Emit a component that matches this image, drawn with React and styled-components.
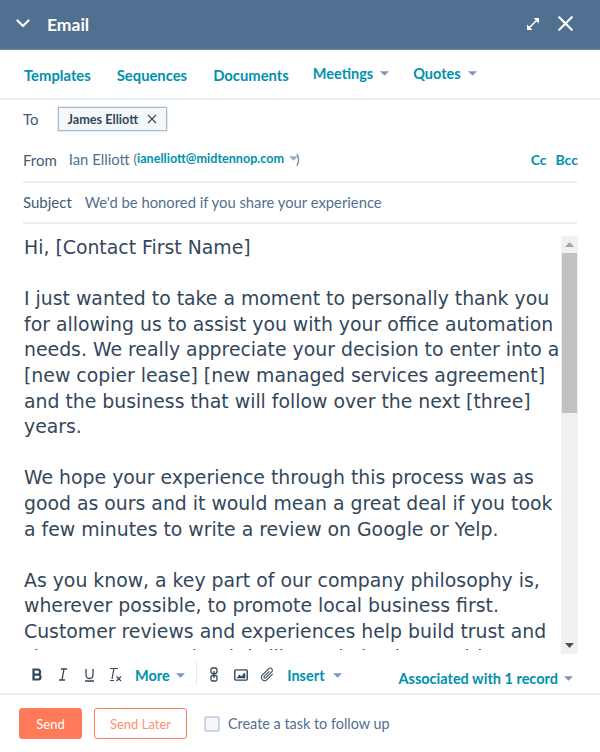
import React from "react";
import styled, { createGlobalStyle } from "styled-components";

const GlobalStyle = createGlobalStyle`
  html, body {
    margin: 0;
    padding: 0;
    background: #fff;
  }
`;

const paragraphs = [
  ["Hi, [Contact First Name]"],
  [
    "I just wanted to take a moment to personally thank you",
    "for allowing us to assist you with your office automation",
    "needs. We really appreciate your decision to enter into a",
    "[new copier lease] [new managed services agreement]",
    "and the business that will follow over the next [three]",
    "years.",
  ],
  [
    "We hope your experience through this process was as",
    "good as ours and it would mean a great deal if you took",
    "a few minutes to write a review on Google or Yelp.",
  ],
  [
    "As you know, a key part of our company philosophy is,",
    "wherever possible, to promote local business first.",
    "Customer reviews and experiences help build trust and",
    "show prospects what it is like to do business with us",
  ],
];

const Caret = ({ color = "#7c98b6" }) => (
  <CaretIcon viewBox="0 0 10 5">
    <path d="M0 0h10L5 5z" fill={color} />
  </CaretIcon>
);

const App = () => {
  return (
    <Page>
      <GlobalStyle />
      <Header>
        <HeaderLeft>
          <svg width="14" height="9" viewBox="0 0 14 9" fill="none">
            <path d="M1.5 1.5 7 7l5.5-5.5" stroke="#fff" strokeWidth="2.2" strokeLinecap="round" strokeLinejoin="round" />
          </svg>
          <HeaderTitle>Email</HeaderTitle>
        </HeaderLeft>
        <HeaderRight>
          <svg width="14" height="14" viewBox="0 0 14 14" fill="none">
            <path d="M2 12 12 2" stroke="#fff" strokeWidth="1.6" />
            <path d="M7.5 1h5.5v5.5zM1 7.5V13h5.5z" fill="#fff" />
          </svg>
          <svg width="15" height="15" viewBox="0 0 15 15" fill="none">
            <path d="M1.2 1.2 13.8 13.8M13.8 1.2 1.2 13.8" stroke="#fff" strokeWidth="2.2" strokeLinecap="round" />
          </svg>
        </HeaderRight>
      </Header>

      <Tabs>
        <Tab>Templates</Tab>
        <Tab>Sequences</Tab>
        <Tab>Documents</Tab>
        <TabMenu>Meetings <Caret /></TabMenu>
        <TabMenu>Quotes <Caret /></TabMenu>
      </Tabs>

      <ToRow>
        <FieldLabel>To</FieldLabel>
        <Chip>
          James Elliott
          <svg width="10" height="10" viewBox="0 0 10 10" fill="none">
            <path d="M1 1l8 8M9 1 1 9" stroke="#33475b" strokeWidth="1.1" />
          </svg>
        </Chip>
      </ToRow>

      <FromRow>
        <FieldLabel>From</FieldLabel>
        <FromValue>
          Ian Elliott <Paren>(</Paren><FromEmail>ianelliott@midtennop.com</FromEmail>
          <Caret color="#99acc2" /><CloseParen>)</CloseParen>
        </FromValue>
        <CcLinks>
          <span>Cc</span>
          <span>Bcc</span>
        </CcLinks>
      </FromRow>

      <SubjectRow>
        <FieldLabel>Subject</FieldLabel>
        <SubjectValue>We'd be honored if you share your experience</SubjectValue>
      </SubjectRow>

      <EditorArea>
        <BodyClip>
          <BodyText>
            {paragraphs.map((lines, i) => (
              <Paragraph key={i}>
                {lines.map((line) => (
                  <BodyLine key={line}>{line}</BodyLine>
                ))}
              </Paragraph>
            ))}
          </BodyText>
        </BodyClip>
        <Scrollbar>
          <ScrollButton>
            <svg width="9" height="5" viewBox="0 0 9 5"><path d="M4.5 0 9 5H0z" fill="#a3a3a3" /></svg>
          </ScrollButton>
          <ScrollTrack>
            <ScrollThumb />
          </ScrollTrack>
          <ScrollButton>
            <svg width="9" height="5" viewBox="0 0 9 5"><path d="M0 0h9L4.5 5z" fill="#505050" /></svg>
          </ScrollButton>
        </Scrollbar>
      </EditorArea>

      <Toolbar>
        <ToolIcon>
          <svg width="12" height="13" viewBox="0 0 12 13" fill="none">
            <path d="M2.5 1.5h4a2.6 2.6 0 0 1 0 5.2h-4zM2.5 6.7h4.6a2.4 2.4 0 0 1 0 4.8H2.5z" stroke="#33475b" strokeWidth="2.2" />
          </svg>
        </ToolIcon>
        <ToolIcon>
          <svg width="10" height="13" viewBox="0 0 10 13" fill="none">
            <path d="M3 1h6M1 12h6M6 1 4 12" stroke="#33475b" strokeWidth="1.3" />
          </svg>
        </ToolIcon>
        <ToolIcon>
          <svg width="11" height="14" viewBox="0 0 11 14" fill="none">
            <path d="M2 1v6a3.5 3.5 0 0 0 7 0V1M1 13h9" stroke="#33475b" strokeWidth="1.3" />
          </svg>
        </ToolIcon>
        <ToolIcon>
          <svg width="13" height="15" viewBox="0 0 13 15" fill="none">
            <path d="M1 1.5h8M5 1.5 3 12M1 13.5h4" stroke="#33475b" strokeWidth="1.2" />
            <path d="M7.5 9.5l4.5 4.5M12 9.5 7.5 14" stroke="#33475b" strokeWidth="1.2" />
          </svg>
        </ToolIcon>
        <ToolMenu>More <Caret /></ToolMenu>
        <ToolDivider />
        <InsertIcon>
          <svg width="8" height="15" viewBox="0 0 8 15" fill="none">
            <rect x="1" y="1" width="6" height="5.5" rx="1.5" stroke="#33475b" strokeWidth="1.3" />
            <rect x="1" y="8.5" width="6" height="5.5" rx="1.5" stroke="#33475b" strokeWidth="1.3" />
            <path d="M4 4v7" stroke="#33475b" strokeWidth="1.3" />
          </svg>
        </InsertIcon>
        <InsertIcon>
          <svg width="14" height="12" viewBox="0 0 13 11" fill="none">
            <rect x=".7" y=".7" width="11.6" height="9.6" rx="1" stroke="#33475b" strokeWidth="1.3" />
            <path d="M2.5 8.5 5 5l2 2 2.5-3.5 1 1v4z" fill="#33475b" />
          </svg>
        </InsertIcon>
        <InsertIcon>
          <svg width="14" height="15" viewBox="0 0 13 14" fill="none">
            <path d="M11.8 6.5 6.5 11.8a3 3 0 0 1-4.3-4.3l5.8-5.8a2 2 0 0 1 2.9 2.9L5.3 10.2a1 1 0 0 1-1.4-1.4L8.7 4" stroke="#33475b" strokeWidth="1" />
          </svg>
        </InsertIcon>
        <InsertMenu>Insert <Caret /></InsertMenu>
        <Associated>Associated with 1 record <Caret /></Associated>
      </Toolbar>

      <Footer>
        <SendButton>Send</SendButton>
        <LaterButton>Send Later</LaterButton>
        <TaskOption>
          <Checkbox />
          Create a task to follow up
        </TaskOption>
      </Footer>
    </Page>
  );
};

const Page = styled.div`
  width: 600px;
  height: 752px;
  overflow: hidden;
  background: #fff;
  color: #33475b;
  font-family: Lato, "Open Sans", sans-serif;
`;

const CaretIcon = styled.svg`
  width: 9px;
  height: 5px;
  flex: none;
`;

const Header = styled.header`
  height: 50px;
  background: #516f90;
  border-bottom: 1px solid #6f88a4;
  box-sizing: border-box;
  padding: 0 27px 2px 16px;
  display: flex;
  align-items: center;
  justify-content: space-between;
`;

const HeaderLeft = styled.div`
  display: flex;
  align-items: center;
  gap: 17px;
`;

const HeaderTitle = styled.span`
  color: #fff;
  font-size: 17.5px;
  font-weight: 700;
  position: relative;
  top: 1px;
`;

const HeaderRight = styled.div`
  display: flex;
  align-items: center;
  gap: 18px;
`;

const Tabs = styled.nav`
  height: 50px;
  box-sizing: border-box;
  padding: 0 24px 3px;
  border-bottom: 2px solid #e9eef4;
  display: flex;
  align-items: center;
  gap: 26px;
`;

const Tab = styled.span`
  color: #0091ae;
  font-size: 14.8px;
  font-weight: 700;
  position: relative;
  top: 2px;
`;

const TabMenu = styled(Tab)`
  display: inline-flex;
  align-items: center;
  gap: 7px;
  top: 1px;
  margin-left: -2px;
  font-size: 14.5px;
`;

const FieldLabel = styled.span`
  font-size: 15px;
  color: #425b76;
`;

const ToRow = styled.div`
  height: 38px;
  padding: 0 23px;
  display: flex;
  align-items: center;
  gap: 19px;
`;

const Chip = styled.span`
  height: 24px;
  box-sizing: border-box;
  padding: 0 9px;
  border: 1px solid #a9bbd0;
  box-shadow: 0 0 0 .5px #cbd6e2;
  background: #f5f8fa;
  display: inline-flex;
  align-items: center;
  gap: 9px;
  font-size: 12.7px;
  font-weight: 700;
  color: #33475b;
`;

const FromRow = styled.div`
  height: 43px;
  margin: 0 23px;
  border-bottom: 2px solid #e9eef4;
  display: flex;
  align-items: center;
  gap: 12px;
`;

const FromValue = styled.span`
  display: inline-flex;
  align-items: center;
  gap: 3px;
  font-size: 14.8px;
  color: #516f90;
  position: relative;
  top: -1px;
`;

const Paren = styled.span`
  margin-left: 1px;
  font-size: 13px;
`;

const CloseParen = styled(Paren)`
  margin-left: -5px;
`;

const FromEmail = styled.span`
  color: #0091ae;
  font-weight: 700;
  font-size: 12.6px;
  margin-right: 2px;
  margin-left: -3px;
`;

const CcLinks = styled.span`
  margin-left: auto;
  margin-right: -1px;
  display: flex;
  gap: 9px;
  color: #0091ae;
  font-size: 14px;
  font-weight: 700;
`;

const SubjectRow = styled.div`
  height: 41px;
  box-sizing: border-box;
  padding-bottom: 1px;
  margin: 0 23px;
  border-bottom: 2px solid #e9eef4;
  display: flex;
  align-items: center;
  gap: 13px;
`;

const SubjectValue = styled.span`
  font-size: 14.8px;
  color: #516f90;
`;

const EditorArea = styled.div`
  height: 430px;
  box-sizing: border-box;
  padding: 12px 22px 0 24px;
  display: flex;
  justify-content: space-between;
`;

const BodyClip = styled.div`
  flex: 1;
  overflow: hidden;
  margin-bottom: 4px;
`;

const BodyText = styled.div`
  margin-top: -1px;
  font-family: "DejaVu Sans", Verdana, sans-serif;
  font-size: 18.85px;
  line-height: 25.6px;
  color: #33475b;
`;

const Paragraph = styled.div`
  margin-bottom: 25.6px;
`;

const BodyLine = styled.div`
  white-space: nowrap;
`;

const Scrollbar = styled.div`
  width: 17px;
  flex: none;
  background: #f1f1f1;
  display: flex;
  flex-direction: column;
`;

const ScrollButton = styled.div`
  height: 17px;
  flex: none;
  display: flex;
  align-items: center;
  justify-content: center;
`;

const ScrollTrack = styled.div`
  flex: 1;
`;

const ScrollThumb = styled.div`
  height: 160px;
  margin: 0 1px;
  background: #c1c1c1;
`;

const Toolbar = styled.div`
  height: 41px;
  box-sizing: border-box;
  padding: 0 27px 0 30px;
  border-bottom: 2px solid #e9eef4;
  display: flex;
  align-items: center;
`;

const ToolIcon = styled.span`
  width: 26px;
  display: inline-flex;
  justify-content: center;
  flex: none;
  position: relative;
  left: -6px;
  top: 1px;
`;

const InsertIcon = styled(ToolIcon)`
  width: 26.5px;
`;

const ToolMenu = styled.span`
  display: inline-flex;
  align-items: center;
  gap: 6px;
  color: #0091ae;
  font-size: 14.5px;
  font-weight: 700;
  margin-left: 1px;
  position: relative;
  top: 2px;
`;

const ToolDivider = styled.span`
  width: 1px;
  height: 24px;
  background: #e5ebf1;
  margin: 0 10px 0 11px;
`;

const InsertMenu = styled(ToolMenu)`
  margin-left: 1px;
  gap: 8px;
`;

const Associated = styled(ToolMenu)`
  margin-left: auto;
  top: 5px;
`;

const Footer = styled.div`
  padding: 13px 19px;
  display: flex;
  align-items: center;
`;

const SendButton = styled.button`
  width: 63px;
  height: 31px;
  padding: 0;
  background: #ff7a59;
  border: 1px solid #ff7a59;
  border-radius: 3px;
  color: #fff;
  font-family: inherit;
  font-size: 13px;
`;

const LaterButton = styled(SendButton)`
  width: 93px;
  margin-left: 12px;
  background: #fff;
  color: #ff8f73;
`;

const TaskOption = styled.label`
  margin-left: 17px;
  display: inline-flex;
  align-items: center;
  gap: 8px;
  font-size: 14.4px;
  color: #516f90;
`;

const Checkbox = styled.span`
  width: 12px;
  height: 12px;
  border: 2px solid #cbd6e2;
  border-radius: 3px;
  background: #f5f8fa;
`;

export default App;
